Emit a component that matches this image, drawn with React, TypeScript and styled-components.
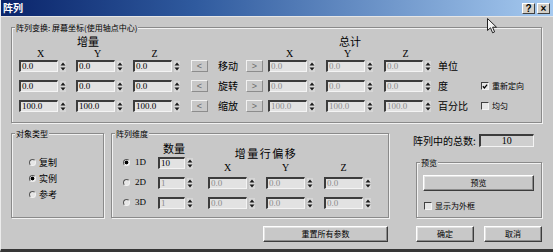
import React from 'react';
import styled, { createGlobalStyle } from 'styled-components';

const GlobalStyle = createGlobalStyle`
    html, body {
        margin: 0;
        padding: 0;
        background: #c8c8c8;
    }
    body {
        font-family: "Noto Sans CJK SC", "Liberation Sans", sans-serif;
        color: #000;
    }
`;

// 숫자 입력칸 + 스피너
const Spinner: React.FC = () => (
    <svg width="6" height="11" viewBox="0 0 6 11">
        <rect x="0" y="0" width="6" height="11" fill="#d6d6d6" />
        <path d="M0.5 4.5 L3 1.5 L5.5 4.5 Z" fill="#1a1a1a" />
        <path d="M0.5 6.5 L3 9.5 L5.5 6.5 Z" fill="#1a1a1a" />
    </svg>
);

const SpinField: React.FC<{ value: string; width?: number; disabled?: boolean }> = ({ value, width = 39, disabled }) => (
    <SpinWrap>
        <Field $w={width} $disabled={disabled}>{value}</Field>
        <Spinner />
    </SpinWrap>
);

const CheckBox: React.FC<{ label: string; checked?: boolean }> = ({ label, checked }) => (
    <CheckRow>
        <CheckSquare>
            {checked && (
                <svg width="7" height="7" viewBox="0 0 7 7">
                    <path d="M1 3.2 L2.8 5.2 L6 1.2" stroke="#000" strokeWidth="1.4" fill="none" />
                </svg>
            )}
        </CheckSquare>
        <CheckText>{label}</CheckText>
    </CheckRow>
);

const Radio: React.FC<{ label: string; checked?: boolean; serif?: boolean }> = ({ label, checked, serif }) => (
    <RadioRow>
        <RadioDot $checked={checked} />
        <RadioText $serif={serif}>{label}</RadioText>
    </RadioRow>
);

const transformRows = [
    { left: '0.0', label: '移动', total: '0.0', unit: '单位', check: null as null | { label: string; checked: boolean } },
    { left: '0.0', label: '旋转', total: '0.0', unit: '度', check: { label: '重新定向', checked: true } },
    { left: '100.0', label: '缩放', total: '100.0', unit: '百分比', check: { label: '均匀', checked: false } },
];

const App: React.FC = () => {
    return (
        <>
            <GlobalStyle />
            <Window>
                <TitleBar>
                    <Title>阵列</Title>
                    <TitleButtons>
                        <TitleButton>?</TitleButton>
                        <TitleButton>×</TitleButton>
                    </TitleButtons>
                </TitleBar>

                <Body>
                    <TransformGroup>
                        <Legend>阵列变换: 屏幕坐标(使用轴点中心)</Legend>
                        <TRow $h={14}>
                            <Header $span={3} $indent={58}>增量</Header>
                            <Header $span={3} $indent={0} />
                            <Header $span={3} $indent={71}>总计</Header>
                        </TRow>
                        <TRow $h={11}>
                            <AxisLabel>X</AxisLabel>
                            <AxisLabel>Y</AxisLabel>
                            <AxisLabel>Z</AxisLabel>
                            <span />
                            <span />
                            <span />
                            <AxisLabel>X</AxisLabel>
                            <AxisLabel>Y</AxisLabel>
                            <AxisLabel>Z</AxisLabel>
                        </TRow>
                        {transformRows.map((row) => (
                            <TRow key={row.label} $h={20}>
                                <SpinField value={row.left} />
                                <SpinField value={row.left} />
                                <SpinField value={row.left} />
                                <ArrowButton>&lt;</ArrowButton>
                                <RowLabel>{row.label}</RowLabel>
                                <ArrowButton>&gt;</ArrowButton>
                                <SpinField value={row.total} disabled />
                                <SpinField value={row.total} disabled />
                                <SpinField value={row.total} disabled />
                                <RowLabel>{row.unit}</RowLabel>
                                <div>{row.check && <CheckBox label={row.check.label} checked={row.check.checked} />}</div>
                            </TRow>
                        ))}
                    </TransformGroup>

                    <LowerGrid>
                        <ObjectGroup>
                            <Legend>对象类型</Legend>
                            <Radio label="复制" />
                            <Radio label="实例" checked />
                            <Radio label="参考" />
                        </ObjectGroup>

                        <DimensionGroup>
                            <Legend>阵列维度</Legend>
                            <DRow $h={15}>
                                <span />
                                <CountHeader>数量</CountHeader>
                                <OffsetHeader>增量行偏移</OffsetHeader>
                            </DRow>
                            <DRow $h={20}>
                                <Radio label="1D" checked serif />
                                <SpinField value="10" width={27} />
                                <DimAxis>X</DimAxis>
                                <DimAxis>Y</DimAxis>
                                <DimAxis>Z</DimAxis>
                            </DRow>
                            <DRow $h={20}>
                                <Radio label="2D" serif />
                                <SpinField value="1" width={27} disabled />
                                <SpinField value="0.0" disabled />
                                <SpinField value="0.0" disabled />
                                <SpinField value="0.0" disabled />
                            </DRow>
                            <DRow $h={20}>
                                <Radio label="3D" serif />
                                <SpinField value="1" width={27} disabled />
                                <SpinField value="0.0" disabled />
                                <SpinField value="0.0" disabled />
                                <SpinField value="0.0" disabled />
                            </DRow>
                        </DimensionGroup>

                        <RightColumn>
                            <TotalRow>
                                <TotalLabel>阵列中的总数:</TotalLabel>
                                <TotalField>10</TotalField>
                            </TotalRow>
                            <PreviewGroup>
                                <Legend>预览</Legend>
                                <PreviewButton>预览</PreviewButton>
                                <PreviewCheck>
                                    <CheckBox label="显示为外框" />
                                </PreviewCheck>
                            </PreviewGroup>
                        </RightColumn>

                        <ResetButton>重置所有参数</ResetButton>
                        <DialogButtons>
                            <DialogButton>确定</DialogButton>
                            <DialogButton>取消</DialogButton>
                        </DialogButtons>
                    </LowerGrid>
                </Body>

                <Cursor>
                    <svg width="11" height="16" viewBox="0 0 11 16">
                        <path d="M0.5 0.5 L0.5 12.5 L3.5 9.8 L5.6 14.8 L7.6 13.9 L5.6 9.2 L9.5 9.2 Z" fill="#f4f4f4" stroke="#222" strokeWidth="1" />
                    </svg>
                </Cursor>
            </Window>
        </>
    );
};

const Window = styled.div`
    position: relative;
    width: 553px;
    height: 252px;
    box-sizing: border-box;
    background-color: #c8c8c8;
    border-left: 1px solid #ececec;
    border-bottom: 3px solid #363636;
    display: flex;
    flex-direction: column;
    overflow: hidden;
`;

const TitleBar = styled.div`
    height: 17px;
    flex-shrink: 0;
    display: flex;
    align-items: center;
    justify-content: space-between;
    padding: 0 3px 0 2px;
    background: linear-gradient(to right, #0a246a 0%, #2f5a9e 35%, #a6caf0 100%);
    border-bottom: 1px solid #e6e6e6;
    box-sizing: border-box;
`;

const Title = styled.span`
    color: #ffffff;
    font-size: 10px;
    font-weight: 700;
    line-height: 12px;
`;

const TitleButtons = styled.div`
    display: flex;
    gap: 2px;
`;

const TitleButton = styled.div`
    width: 13px;
    height: 11px;
    box-sizing: border-box;
    background-color: #d4d0c8;
    border: 1px solid;
    border-color: #ffffff #404040 #404040 #ffffff;
    font-family: "Liberation Sans", sans-serif;
    font-size: 10px;
    font-weight: 700;
    line-height: 9px;
    text-align: center;
`;

const Body = styled.div`
    display: flex;
    flex-direction: column;
    padding: 0 11px 0 10px;
`;

const GroupBox = styled.div`
    position: relative;
    box-sizing: border-box;
    border: 1px solid #8a8a8a;
    box-shadow: inset 1px 1px 0 #f2f2f2, 1px 1px 0 #f2f2f2;
`;

const Legend = styled.span`
    position: absolute;
    top: -6px;
    left: 3px;
    padding: 0 1px;
    background-color: #c8c8c8;
    font-size: 8px;
    line-height: 11px;
    white-space: nowrap;
`;

const TransformGroup = styled(GroupBox)`
    margin-top: 10px;
    height: 96px;
    padding: 7px 0 0 7px;
`;

const TRow = styled.div<{ $h: number }>`
    display: grid;
    grid-template-columns: 57px 57px 58px 27px 28px 22px 58px 58px 54px 43px auto;
    height: ${(p) => p.$h}px;
    align-items: start;
`;

const Header = styled.div<{ $span: number; $indent: number }>`
    grid-column: span ${(p) => p.$span};
    padding-left: ${(p) => p.$indent}px;
    font-size: 11px;
    line-height: 12px;
`;

const AxisLabel = styled.div`
    width: 39px;
    margin-left: 2px;
    text-align: center;
    font-family: "Liberation Serif", serif;
    font-size: 10px;
    line-height: 10px;
`;

const SpinWrap = styled.div`
    display: flex;
    align-items: center;
    gap: 2px;
    height: 12px;
`;

const Field = styled.div<{ $w: number; $disabled?: boolean }>`
    width: ${(p) => p.$w}px;
    height: 12px;
    box-sizing: border-box;
    border-top: 2px solid #3c3c3c;
    border-left: 2px solid #3c3c3c;
    border-right: 1px solid #f4f4f4;
    border-bottom: 1px solid #f4f4f4;
    background-color: #e2e2e2;
    padding-left: 1px;
    font-family: "Liberation Serif", serif;
    font-size: 9px;
    line-height: 9px;
    color: ${(p) => (p.$disabled ? '#8c8c8c' : '#000')};
    overflow: hidden;
`;

const ArrowButton = styled.div`
    width: 17px;
    height: 12px;
    box-sizing: border-box;
    border: 1px solid;
    border-color: #f2f2f2 #8c8c8c #8c8c8c #f2f2f2;
    display: flex;
    align-items: center;
    justify-content: center;
    font-family: "Liberation Sans", sans-serif;
    font-size: 9px;
    color: #6a6a6a;
`;

const RowLabel = styled.div`
    font-size: 10px;
    line-height: 12px;
    white-space: nowrap;
`;

const CheckRow = styled.div`
    display: flex;
    align-items: center;
    gap: 3px;
    height: 12px;
`;

const CheckSquare = styled.div`
    width: 8px;
    height: 8px;
    box-sizing: border-box;
    border-top: 1px solid #404040;
    border-left: 1px solid #404040;
    border-right: 1px solid #f4f4f4;
    border-bottom: 1px solid #f4f4f4;
    background-color: #e6e6e6;
    display: flex;
    align-items: center;
    justify-content: center;
`;

const CheckText = styled.span`
    font-size: 8px;
    line-height: 10px;
    white-space: nowrap;
`;

const LowerGrid = styled.div`
    margin-top: 10px;
    display: grid;
    grid-template-columns: 93px 278px auto;
    grid-template-rows: 85px 16px;
    column-gap: 7px;
    row-gap: 8px;
`;

const ObjectGroup = styled(GroupBox)`
    display: flex;
    flex-direction: column;
    gap: 5px;
    padding: 23px 0 0 17px;
`;

const RadioRow = styled.div`
    display: flex;
    align-items: center;
    gap: 3px;
    height: 11px;
`;

const RadioDot = styled.div<{ $checked?: boolean }>`
    width: 7px;
    height: 7px;
    box-sizing: border-box;
    border-radius: 50%;
    border: 1px solid;
    border-color: #555555 #f2f2f2 #f2f2f2 #555555;
    background: ${(p) =>
        p.$checked ? 'radial-gradient(circle, #000 0 1.6px, #e6e6e6 2.2px)' : '#e6e6e6'};
`;

const RadioText = styled.span<{ $serif?: boolean }>`
    font-family: ${(p) => (p.$serif ? '"Liberation Serif", serif' : '"Noto Sans CJK SC", sans-serif')};
    font-size: 9px;
    line-height: 11px;
    margin-left: ${(p) => (p.$serif ? 2 : 0)}px;
`;

const DimensionGroup = styled(GroupBox)`
    padding: 8px 0 0 11px;
`;

const DRow = styled.div<{ $h: number }>`
    display: grid;
    grid-template-columns: 35px 50px 58px 58px auto;
    height: ${(p) => p.$h}px;
    align-items: start;
`;

const CountHeader = styled.div`
    padding-left: 5px;
    font-size: 11px;
    line-height: 12px;
`;

const OffsetHeader = styled.div`
    grid-column: span 2;
    margin-top: 6px;
    text-align: center;
    font-size: 11px;
    line-height: 11px;
    letter-spacing: 1.5px;
    white-space: nowrap;
`;

const DimAxis = styled.div`
    width: 39px;
    margin-top: 6px;
    text-align: center;
    font-family: "Liberation Serif", serif;
    font-size: 10px;
    line-height: 9px;
`;

const RightColumn = styled.div`
    display: flex;
    flex-direction: column;
`;

const TotalRow = styled.div`
    display: flex;
    align-items: center;
    height: 13px;
    margin-top: 1px;
    padding-left: 17px;
`;

const TotalLabel = styled.span`
    font-size: 10px;
    line-height: 12px;
    white-space: nowrap;
`;

const TotalField = styled.div`
    width: 55px;
    height: 13px;
    margin-left: 3px;
    box-sizing: border-box;
    border-top: 2px solid #3c3c3c;
    border-left: 2px solid #3c3c3c;
    border-right: 1px solid #f4f4f4;
    border-bottom: 1px solid #f4f4f4;
    background-color: #cfcfcf;
    text-align: center;
    font-family: "Liberation Serif", serif;
    font-size: 10px;
    line-height: 10px;
`;

const PreviewGroup = styled(GroupBox)`
    margin: 15px 0 0 20px;
    height: 56px;
    padding: 12px 0 0 6px;
`;

const RaisedButton = styled.div`
    box-sizing: border-box;
    height: 16px;
    border: 1px solid;
    border-color: #ffffff #3c3c3c #3c3c3c #ffffff;
    box-shadow: inset -1px -1px 0 #8c8c8c, inset 1px 1px 0 #e2e2e2;
    background-color: #c8c8c8;
    display: flex;
    align-items: center;
    justify-content: center;
    font-size: 8px;
    line-height: 10px;
`;

const PreviewButton = styled(RaisedButton)`
    width: 111px;
`;

const PreviewCheck = styled.div`
    margin: 9px 0 0 1px;
`;

const ResetButton = styled(RaisedButton)`
    grid-column: 2;
    justify-self: end;
    width: 125px;
    margin-right: 1px;
`;

const DialogButtons = styled.div`
    grid-column: 3;
    display: flex;
    gap: 10px;
    padding-left: 20px;
`;

const DialogButton = styled(RaisedButton)`
    width: 58px;
`;

const Cursor = styled.div`
    position: absolute;
    left: 486px;
    top: 18px;
    line-height: 0;
`;

export default App;
